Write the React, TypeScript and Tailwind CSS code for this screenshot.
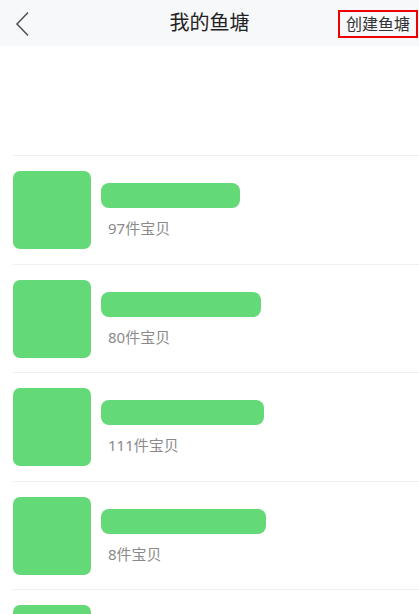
const ponds = [
  { count: 97, bar: 139 },
  { count: 80, bar: 160 },
  { count: 111, bar: 163 },
  { count: 8, bar: 165 },
  { count: null, bar: 150 },
];

export default function App() {
  return (
    <div
      className="w-[419px] h-[614px] overflow-hidden bg-white"
      style={{ fontFamily: '"Noto Sans", "Noto Sans CJK SC", sans-serif' }}
    >
      <header className="relative flex h-[46px] items-center justify-center bg-[#f7f8fa]">
        <svg
          className="absolute left-[14px] top-[11px]"
          width="18"
          height="26"
          viewBox="0 0 18 26"
          fill="none"
          stroke="#555"
          strokeWidth="1.6"
        >
          <path d="M14 1.5 L3 13 L14 24.5" />
        </svg>
        <h1 className="text-[20px] leading-none text-[#222]">我的鱼塘</h1>
        <div className="absolute right-[1px] top-[10px] flex h-[28px] w-[80px] items-center justify-center border-2 border-[#ee0000] text-[16px] text-[#333]">
          创建鱼塘
        </div>
      </header>

      <div className="h-[109px]" />

      <ul>
        {ponds.map((p, i) => (
          <li key={i} className="ml-[13px] flex border-t border-[#f0f0f0] pt-[15px] pb-[14.5px]">
            <div className="h-[78px] w-[78px] shrink-0 rounded-[7px] bg-[#64d978]" />
            <div className="ml-[10px] flex flex-col pt-[12px]">
              <div
                className="h-[25px] rounded-[8px] bg-[#64d978]"
                style={{ width: p.bar }}
              />
              {p.count !== null && (
                <span className="mt-[13px] pl-[7px] text-[15px] leading-none text-[#8a8a8a]">
                  {p.count}件宝贝
                </span>
              )}
            </div>
          </li>
        ))}
      </ul>
    </div>
  );
}
